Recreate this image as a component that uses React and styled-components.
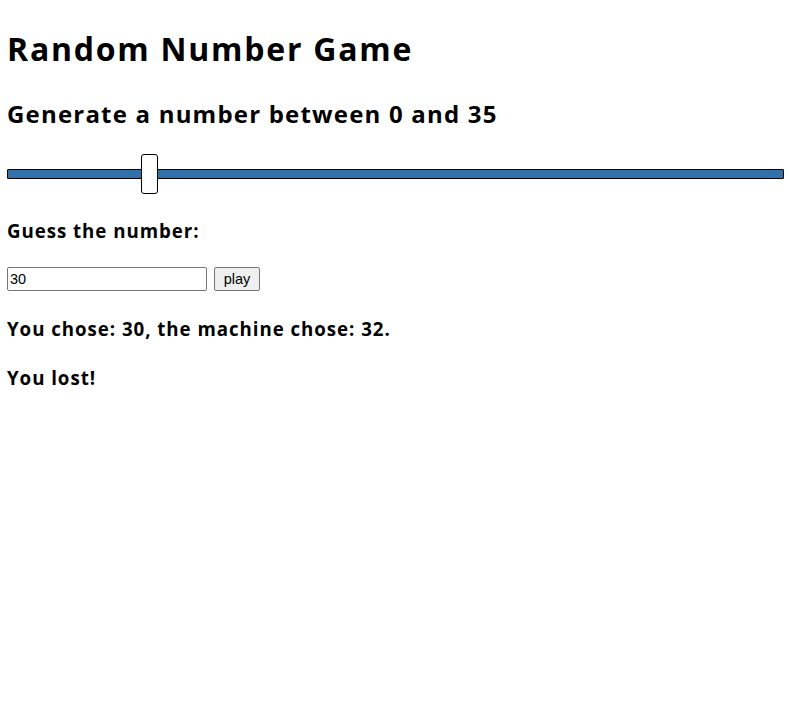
import React, { useState } from "react";
import styled, { createGlobalStyle } from "styled-components";

const Global = createGlobalStyle`
  html, body { margin: 0; padding: 0; background: #fff; }
  body { padding: 8px 8px 8px 7px; font-family: "Open Sans", "Noto Sans", sans-serif; color: #000; }
`;

const Page = styled.div`
  display: flex;
  flex-direction: column;
`;

const Title = styled.h1`
  font-size: 32px;
  font-weight: 700;
  margin: 20px 0 0;
  line-height: 42px;
  letter-spacing: 1.75px;
`;

const Subtitle = styled.h2`
  font-size: 24px;
  font-weight: 700;
  margin: 28px 0 0;
  line-height: 32px;
  letter-spacing: 1.2px;
`;

const Range = styled.input`
  -webkit-appearance: none;
  appearance: none;
  width: 777px;
  height: 40px;
  margin: 24px 0 0;
  background: transparent;
  &::-webkit-slider-runnable-track {
    height: 10px;
    background: #3071a9;
    border: 1px solid #000;
    box-sizing: border-box;
    border-radius: 1px;
  }
  &::-webkit-slider-thumb {
    -webkit-appearance: none;
    width: 17px;
    height: 40px;
    margin-top: -16px;
    background: #fff;
    border: 1px solid #000;
    border-radius: 3px;
    box-sizing: border-box;
  }
`;

const Label = styled.h3`
  font-size: 18.72px;
  font-weight: 700;
  margin: ${(p) => p.$top}px 0 0;
  line-height: 26px;
  letter-spacing: 0.95px;
`;

const Row = styled.div`
  display: flex;
  align-items: center;
  gap: 7px;
  margin-top: 23px;
`;

const Field = styled.input`
  width: 200px;
  height: 24px;
  box-sizing: border-box;
  border: 1px solid #767676;
  border-radius: 2px;
  padding: 1px 2px;
  font-family: "Liberation Sans", Arial, sans-serif;
  font-size: 14.5px;
  color: #000;
  outline: none;
`;

const Button = styled.button`
  height: 24px;
  width: 46px;
  padding: 0;
  box-sizing: border-box;
  border: 1px solid #767676;
  border-radius: 2px;
  background: #efefef;
  font-family: "Liberation Sans", Arial, sans-serif;
  font-size: 14.5px;
  color: #000;
`;

export default function App() {
  const [val, setVal] = useState(35);
  const [guess, setGuess] = useState("30");
  return (
    <Page>
      <Global />
      <Title>Random Number Game</Title>
      <Subtitle>Generate a number between 0 and {val}</Subtitle>
      <Range type="range" min={0} max={200} value={val} onChange={(e) => setVal(+e.target.value)} />
      <Label $top={24}>Guess the number:</Label>
      <Row>
        <Field value={guess} onChange={(e) => setGuess(e.target.value)} />
        <Button>play</Button>
      </Row>
      <Label $top={25}>You chose: 30, the machine chose: 32.</Label>
      <Label $top={23}>You lost!</Label>
    </Page>
  );
}
